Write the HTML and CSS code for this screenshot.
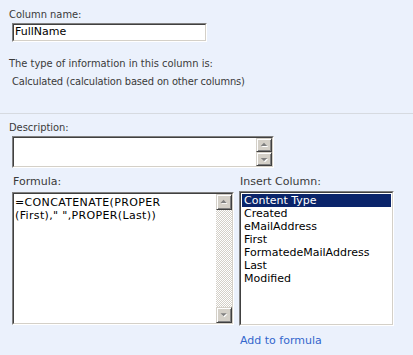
FILE: index.html
```html
<!DOCTYPE html>
<html>
<head>
<meta charset="utf-8">
<link rel="stylesheet" href="styles.css">
</head>
<body>
<div class="page">
  <section class="top">
    <div class="lbl first">Column name:</div>
    <div class="sunken input"><div class="inner"><span class="val">FullName</span></div></div>
    <div class="lbl type">The type of information in this column is:</div>
    <div class="lbl calc">Calculated (calculation based on other columns)</div>
  </section>
  <section class="bottom">
    <div class="lbl desc">Description:</div>
    <div class="sunken descbox">
      <div class="inner row">
        <div class="text"></div>
        <div class="sb">
          <div class="btn small"><svg width="15" height="13" viewBox="0 0 15 13"><polygon points="5,8 12,8 8.5,4.5" fill="#fff"/><polygon points="4,7 11,7 7.5,3.5" fill="#808080"/></svg></div>
          <div class="btn small"><svg width="15" height="13" viewBox="0 0 15 13"><polygon points="5,6 12,6 8.5,9.5" fill="#fff"/><polygon points="4,5 11,5 7.5,8.5" fill="#808080"/></svg></div>
        </div>
      </div>
    </div>
    <div class="cols">
      <div class="col fcol">
        <div class="vlbl">Formula:</div>
        <div class="sunken formula">
          <div class="inner row">
            <div class="text ftext">=CONCATENATE(PROPER<br>(First),"&nbsp;",PROPER(Last))</div>
            <div class="sb tall">
              <div class="btn"><svg width="16" height="16" viewBox="0 0 16 16"><polygon points="5,10 12,10 8.5,6.5" fill="#fff"/><polygon points="4,9 11,9 7.5,5.5" fill="#808080"/></svg></div>
              <div class="track"></div>
              <div class="btn"><svg width="16" height="16" viewBox="0 0 16 16"><polygon points="5,7 12,7 8.5,10.5" fill="#fff"/><polygon points="4,6 11,6 7.5,9.5" fill="#808080"/></svg></div>
            </div>
          </div>
        </div>
      </div>
      <div class="col lcol">
        <div class="vlbl ins">Insert Column:</div>
        <div class="sunken list">
          <div class="inner items">
            <div class="item sel">Content Type</div>
            <div class="item">Created</div>
            <div class="item">eMailAddress</div>
            <div class="item">First</div>
            <div class="item">FormatedeMailAddress</div>
            <div class="item">Last</div>
            <div class="item">Modified</div>
          </div>
        </div>
        <a class="add" href="#">Add to formula</a>
      </div>
    </div>
  </section>
</div>
</body>
</html>
```

FILE: styles.css
```css
html, body {
  margin: 0;
  padding: 0;
  background: #ebf1fc;
}
.page {
  width: 413px;
  height: 355px;
  background: #ebf1fc;
  font-family: "DejaVu Sans Condensed", "DejaVu Sans", sans-serif;
  font-size: 11px;
  line-height: 13px;
  color: #333;
  overflow: hidden;
}
.top {
  height: 113px;
  padding-left: 9px;
  border-bottom: 1px solid #d6dae0;
  display: flex;
  flex-direction: column;
  align-items: flex-start;
}
.lbl { color: #3a3a3a; white-space: nowrap; }
.first { margin-top: 8px; }
.sunken {
  border: 1px solid;
  border-color: #808080 #ffffff #ffffff #808080;
  background: #fff;
}
.sunken > .inner {
  border: 1px solid;
  border-color: #404040 #d4d0c8 #d4d0c8 #404040;
  box-sizing: border-box;
  height: 100%;
}
.input {
  margin: 2px 0 0 3px;
  width: 193px;
  height: 17px;
}
.input .val {
  font-family: "DejaVu Sans", sans-serif;
  color: #000;
  padding-left: 1px;
  line-height: 14px;
  display: block;
}
.type { margin-top: 15px; }
.calc { margin-top: 5px; padding-left: 3px; letter-spacing: -0.15px; }

.bottom {
  padding-left: 9px;
  display: flex;
  flex-direction: column;
  align-items: flex-start;
}
.desc { margin-top: 7px; }
.descbox {
  margin: 2px 0 0 3px;
  width: 260px;
  height: 30px;
}
.row { display: flex; }
.row .text { flex: 1; }
.sb { display: flex; flex-direction: column; width: 16px; }
.btn {
  width: 16px;
  height: 16px;
  box-sizing: border-box;
  background: #d4d0c8;
  border: 1px solid;
  border-color: #d4d0c8 #404040 #404040 #d4d0c8;
  box-shadow: inset 1px 1px #ffffff, inset -1px -1px #808080;
  display: flex;
  align-items: center;
  justify-content: center;
}
.btn svg { display: block; }
.btn.small { height: 14px; }
.track {
  flex: 1;
  background: repeating-conic-gradient(#d4d0c8 0 25%, #ffffff 0 50%) 0 0 / 2px 2px;
}
.cols {
  display: flex;
  gap: 5px;
  margin-left: 3px;
  margin-top: 7px;
}
.col { display: flex; flex-direction: column; align-items: flex-start; }
.vlbl {
  font-family: "DejaVu Sans", sans-serif;
  color: #3a3a3a;
  padding-left: 1px;
}
.formula {
  margin-top: 4px;
  width: 220px;
  height: 131px;
}
.ftext {
  font-family: "DejaVu Sans", sans-serif;
  color: #000;
  padding: 2px 0 0 1px;
  white-space: nowrap;
  letter-spacing: 0.35px;
}
.list {
  margin-top: 3px;
  width: 153px;
  height: 133px;
}
.items { padding: 1px; }
.item {
  font-family: "DejaVu Sans", sans-serif;
  color: #000;
  padding-left: 2px;
  height: 13px;
  white-space: nowrap;
}
.item.sel { background: #0a246a; color: #fff; }
.add {
  font-family: "DejaVu Sans", sans-serif;
  color: #3366cc;
  text-decoration: none;
  margin-top: 8px;
  padding-left: 1px;
}
```
